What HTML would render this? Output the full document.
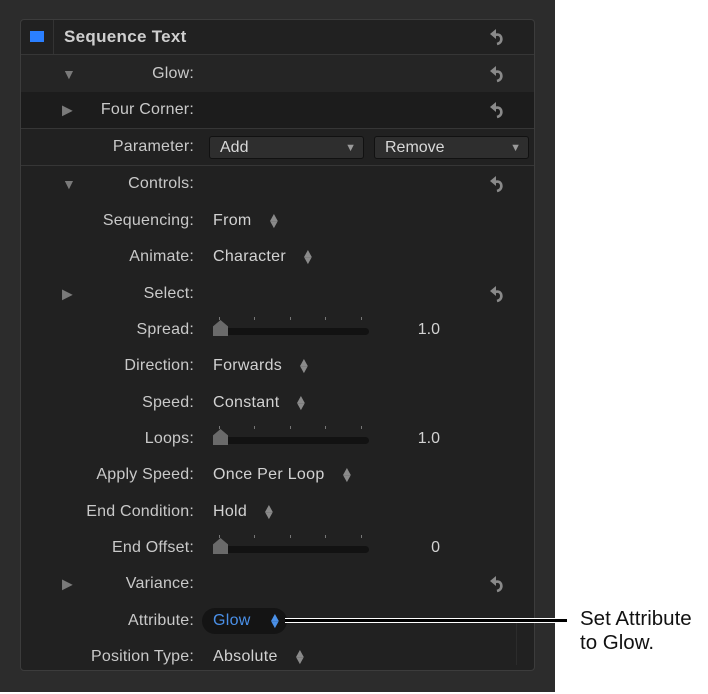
<html><head><style>
body{margin:0;width:708px;height:694px;background:#fff;position:relative;overflow:hidden;font-family:"Liberation Sans",sans-serif;}
#outer{position:absolute;left:0;top:0;width:555px;height:692px;background:#2c2c2c;}
#panel{position:absolute;left:20px;top:19px;width:515px;height:652px;background:#212121;border:1px solid #3c3c3c;border-radius:4px;box-sizing:border-box;overflow:hidden}
.row{position:absolute;left:0;width:100%;height:36px;}
.lab{position:absolute;right:340px;font-size:16px;letter-spacing:0.2px;color:#c9c9c9;top:50%;transform:translateY(-50%);white-space:nowrap}
.val{position:absolute;left:192px;font-size:16px;letter-spacing:0.3px;color:#d2d2d2;top:50%;transform:translateY(-50%);white-space:nowrap}
.st{display:inline-block;margin-left:16px;font-size:12px;color:#8a8a8a;line-height:7px;vertical-align:middle;transform:scaleX(1.1)}
.tri{position:absolute;left:41px;top:50%;transform:translateY(-50%);color:#7a7a7a;font-size:14px}
.reset{position:absolute;left:468px;top:50%;transform:translateY(-50%)}
.sl{position:absolute;left:192px;top:50%;width:156px;height:7px;margin-top:-2px;background:#121212;border-radius:4px}
.tick{position:absolute;top:-11px;width:1px;height:3px;background:#777}
.knob{position:absolute;left:0;top:-8px;width:15px;height:16px;background:#6a6a6a;clip-path:polygon(50% 0,100% 40%,100% 100%,0 100%,0 40%)}
.num{position:absolute;right:94px;font-size:16px;color:#d2d2d2;top:50%;transform:translateY(-50%)}
.line{position:absolute;left:0;width:100%;height:1px;background:#363636}
.btn{position:absolute;top:7px;height:23px;border:1px solid #111;border-radius:3px;background:#2e2e2e;font-size:16px;color:#d8d8d8;box-sizing:border-box;padding:2px 10px}
.btn span{position:absolute;right:7px;top:5px;font-size:11px;color:#9a9a9a}
</style></head><body>
<div id="outer"></div>
<div id="panel">
<svg width="0" height="0" style="position:absolute"><defs><g id="r"><path d="M8 16c4-1 5-4 4-7-1-2-3-3-6-2" fill="none" stroke="#8a8a8a" stroke-width="2.6"/><path d="M1 6l6-5v10z" fill="#8a8a8a"/></g></defs></svg>
<div class="row" style="top:0;height:34px;">
 <div style="position:absolute;left:9px;top:11px;width:14px;height:11px;background:#2a7fff"></div>
 <div style="position:absolute;left:32px;top:0;width:1px;height:34px;background:#333"></div>
 <div style="position:absolute;left:43px;top:7px;font-size:17px;font-weight:bold;letter-spacing:0.3px;color:#cfcfcf">Sequence Text</div>
 <svg class="reset" width="16" height="18"><use href="#r"/></svg>
</div>
<div class="line" style="top:34px"></div>
<div class="row" style="top:35px;height:37px;background:#252525"><span class="tri">▼</span><span class="lab">Glow:</span><svg class="reset" width="16" height="18"><use href="#r"/></svg></div>
<div class="row" style="top:72px;height:36px;background:#1c1c1c"><span class="tri">▶</span><span class="lab">Four Corner:</span><svg class="reset" width="16" height="18"><use href="#r"/></svg></div>
<div class="line" style="top:108px"></div>
<div class="row" style="top:109px"><span class="lab">Parameter:</span>
 <div class="btn" style="left:188px;width:155px">Add<span>▼</span></div>
 <div class="btn" style="left:353px;width:155px">Remove<span>▼</span></div></div>
<div class="line" style="top:145px"></div>
<div class="row" style="top:146px"><span class="tri">▼</span><span class="lab">Controls:</span><svg class="reset" width="16" height="18"><use href="#r"/></svg></div>
<div class="row" style="top:183px"><span class="lab">Sequencing:</span><span class="val">From<span class="st">▲<br>▼</span></span></div>
<div class="row" style="top:219px"><span class="lab">Animate:</span><span class="val">Character<span class="st">▲<br>▼</span></span></div>
<div class="row" style="top:256px"><span class="tri">▶</span><span class="lab">Select:</span><svg class="reset" width="16" height="18"><use href="#r"/></svg></div>
<div class="row" style="top:292px"><span class="lab">Spread:</span><div class="sl"><div class="tick" style="left:6px"></div><div class="tick" style="left:41px"></div><div class="tick" style="left:77px"></div><div class="tick" style="left:112px"></div><div class="tick" style="left:148px"></div><div class="knob"></div></div><span class="num">1.0</span></div>
<div class="row" style="top:328px"><span class="lab">Direction:</span><span class="val">Forwards<span class="st">▲<br>▼</span></span></div>
<div class="row" style="top:365px"><span class="lab">Speed:</span><span class="val">Constant<span class="st">▲<br>▼</span></span></div>
<div class="row" style="top:401px"><span class="lab">Loops:</span><div class="sl"><div class="tick" style="left:6px"></div><div class="tick" style="left:41px"></div><div class="tick" style="left:77px"></div><div class="tick" style="left:112px"></div><div class="tick" style="left:148px"></div><div class="knob"></div></div><span class="num">1.0</span></div>
<div class="row" style="top:437px"><span class="lab">Apply Speed:</span><span class="val">Once Per Loop<span class="st">▲<br>▼</span></span></div>
<div class="row" style="top:474px"><span class="lab">End Condition:</span><span class="val">Hold<span class="st">▲<br>▼</span></span></div>
<div class="row" style="top:510px"><span class="lab">End Offset:</span><div class="sl"><div class="tick" style="left:6px"></div><div class="tick" style="left:41px"></div><div class="tick" style="left:77px"></div><div class="tick" style="left:112px"></div><div class="tick" style="left:148px"></div><div class="knob"></div></div><span class="num">0</span></div>
<div class="row" style="top:546px"><span class="tri">▶</span><span class="lab">Variance:</span><svg class="reset" width="16" height="18"><use href="#r"/></svg></div>
<div class="row" style="top:583px"><span class="lab">Attribute:</span>
 <div style="position:absolute;left:181px;top:5px;width:85px;height:26px;border-radius:13px;background:#141414"></div>
 <span class="val" style="color:#4a90e8">Glow<span class="st" style="margin-left:18px;color:#4a90e8">▲<br>▼</span></span></div>
<div class="row" style="top:619px"><span class="lab">Position Type:</span><span class="val">Absolute<span class="st">▲<br>▼</span></span></div>
<div style="position:absolute;left:495px;top:600px;width:1px;height:45px;background:#2c2c2c"></div>
</div>
<div style="position:absolute;left:285px;top:618px;width:282px;border-top:1px solid #fff;border-bottom:1px solid #fff;box-sizing:border-box;background:#000;height:5px"></div>
<div style="position:absolute;left:580px;top:607px;font-size:20.5px;line-height:24px;color:#111">Set Attribute<br>to Glow.</div>
</body></html>
